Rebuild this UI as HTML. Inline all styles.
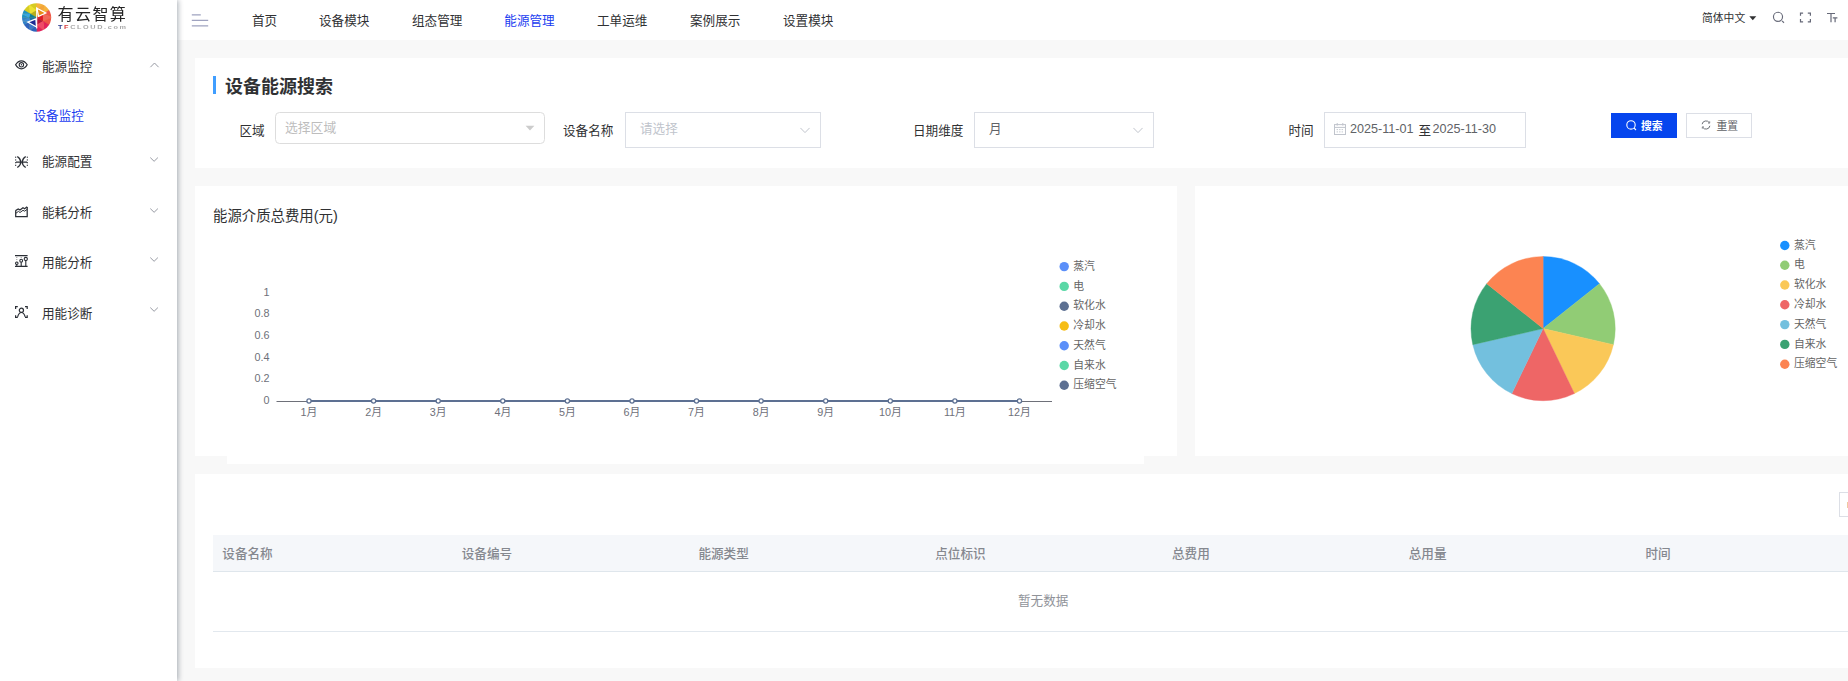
<!DOCTYPE html>
<html lang="zh-CN">
<head>
<meta charset="utf-8">
<title>设备能源搜索</title>
<style>
*{box-sizing:border-box;margin:0;padding:0}
html,body{width:1848px;height:681px;overflow:hidden;background:#f8f8f8}
body{font-family:"Liberation Sans","Noto Sans CJK SC",sans-serif;color:#303133;position:relative;-webkit-font-smoothing:antialiased}
.abs{position:absolute}
.t{position:absolute;white-space:nowrap;line-height:1}
/* sidebar */
#side{position:absolute;left:0;top:0;width:177px;height:681px;background:#fff;box-shadow:1.8px 0 5.4px rgba(0,21,41,.35);z-index:10}
#side .mi{position:absolute;left:42px;font-size:12.6px;color:#303133;line-height:14px;white-space:nowrap}
#side svg{position:absolute;overflow:visible}
/* header */
#head{position:absolute;left:177px;top:0;width:1671px;height:40px;background:#fff;z-index:5}
#head .nav{position:absolute;top:14px;font-size:12.6px;line-height:14px;color:#303133;white-space:nowrap}
#head svg{position:absolute;overflow:visible}
.card{position:absolute;background:#fff}
.lbl{position:absolute;font-size:12.6px;line-height:14px;color:#303133;white-space:nowrap}
.box{position:absolute;background:#fff;border:1px solid #dcdfe6}
.ph{position:absolute;font-size:12.6px;line-height:14px;white-space:nowrap}
svg text{font-family:"Liberation Sans","Noto Sans CJK SC",sans-serif}
.th{position:absolute;top:547px;font-size:12.6px;line-height:14px;font-weight:500;color:#85888f;white-space:nowrap}
</style>
</head>
<body>

<!-- ================= HEADER ================= -->
<div id="head">
  <svg style="left:14px;top:13px" width="18" height="14" viewBox="0 0 18 14"><g stroke="#9fa3c0" stroke-width="1.4" fill="none"><path d="M0.800 1.900H9.800M0.800 7.400H17.200M0.800 12.900H17.200"/></g></svg>
  <span class="nav" style="left:75px">首页</span>
  <span class="nav" style="left:142px">设备模块</span>
  <span class="nav" style="left:235px">组态管理</span>
  <span class="nav" style="left:327.3px;color:#1a3cf0">能源管理</span>
  <span class="nav" style="left:420px">工单运维</span>
  <span class="nav" style="left:513px">案例展示</span>
  <span class="nav" style="left:606px">设置模块</span>
  <span class="t" style="left:1525px;top:12px;font-size:10.8px;line-height:12px;color:#303133">简体中文</span>
  <svg style="left:1572px;top:16px" width="8" height="5" viewBox="0 0 8 5"><path d="M0.3 0.3H7.3L3.8 4.3Z" fill="#303133"/></svg>
  <svg style="left:1595px;top:11px" width="13" height="13" viewBox="0 0 13 13"><circle cx="6" cy="5.800" r="4.550" fill="none" stroke="#666978" stroke-width="1.150"/><path d="M10 9.900L12 11.700" stroke="#666978" stroke-width="1.150" fill="none"/></svg>
  <svg style="left:1622px;top:12px" width="13" height="11" viewBox="0 0 13 11"><path d="M1.500 3.800V1.100H4.100M8.800 1.100H11.400V3.800M11.400 7.100V9.800H8.800M4.100 9.800H1.500V7.100" fill="none" stroke="#666978" stroke-width="1.200"/></svg>
  <svg style="left:1650px;top:12px" width="11" height="11" viewBox="0 0 11 11"><path d="M0 1.500H8M4 1.500V10.200M5.800 5.900H10.400M8.100 5.900V10.200" fill="none" stroke="#666978" stroke-width="1.200"/></svg>
</div>

<!-- ================= SIDEBAR ================= -->
<div id="side">
  <!-- logo -->
  <svg style="left:22px;top:2.5px" width="30" height="30" viewBox="0 0 30 30">
    <defs><clipPath id="lc"><ellipse cx="14.6" cy="14.5" rx="14.6" ry="14.2"/></clipPath><filter id="lb" x="-10%" y="-10%" width="120%" height="120%"><feGaussianBlur stdDeviation="0.35"/></filter></defs>
    <g clip-path="url(#lc)"><g filter="url(#lb)">
      <rect x="-2" y="-2" width="34" height="34" fill="#e8c22a"/>
      <polygon points="14.60,14.50 8.12,10.76 14.60,7.01" fill="#b5ae1e" stroke="#b5ae1e" stroke-width="0.3"/>
      <polygon points="8.12,10.76 0.88,6.58 6.68,0.78" fill="#d6cc22" stroke="#d6cc22" stroke-width="0.3"/>
      <polygon points="8.12,10.76 6.68,0.78 14.60,7.01" fill="#ebe233" stroke="#ebe233" stroke-width="0.3"/>
      <polygon points="14.60,7.01 6.68,0.78 14.60,-1.34" fill="#d6cc22" stroke="#d6cc22" stroke-width="0.3"/>
      <polygon points="14.60,14.50 14.60,7.01 21.08,10.76" fill="#ee9a1c" stroke="#ee9a1c" stroke-width="0.3"/>
      <polygon points="14.60,7.01 14.60,-1.34 22.52,0.78" fill="#f6b23e" stroke="#f6b23e" stroke-width="0.3"/>
      <polygon points="14.60,7.01 22.52,0.78 21.08,10.76" fill="#f3a43a" stroke="#f3a43a" stroke-width="0.3"/>
      <polygon points="21.08,10.76 22.52,0.78 28.32,6.58" fill="#f6b23e" stroke="#f6b23e" stroke-width="0.3"/>
      <polygon points="14.60,14.50 21.08,10.76 21.08,18.24" fill="#de1a22" stroke="#de1a22" stroke-width="0.3"/>
      <polygon points="21.08,10.76 28.32,6.58 30.44,14.50" fill="#ee5546" stroke="#ee5546" stroke-width="0.3"/>
      <polygon points="21.08,10.76 30.44,14.50 21.08,18.24" fill="#f1685a" stroke="#f1685a" stroke-width="0.3"/>
      <polygon points="21.08,18.24 30.44,14.50 28.32,22.42" fill="#ee5546" stroke="#ee5546" stroke-width="0.3"/>
      <polygon points="14.60,14.50 21.08,18.24 14.60,21.99" fill="#b5183c" stroke="#b5183c" stroke-width="0.3"/>
      <polygon points="21.08,18.24 28.32,22.42 22.52,28.22" fill="#e2205a" stroke="#e2205a" stroke-width="0.3"/>
      <polygon points="21.08,18.24 22.52,28.22 14.60,21.99" fill="#ef4868" stroke="#ef4868" stroke-width="0.3"/>
      <polygon points="14.60,21.99 22.52,28.22 14.60,30.34" fill="#e2205a" stroke="#e2205a" stroke-width="0.3"/>
      <polygon points="14.60,14.50 14.60,21.99 8.12,18.24" fill="#2a4fae" stroke="#2a4fae" stroke-width="0.3"/>
      <polygon points="14.60,21.99 14.60,30.34 6.68,28.22" fill="#2d62bc" stroke="#2d62bc" stroke-width="0.3"/>
      <polygon points="14.60,21.99 6.68,28.22 8.12,18.24" fill="#3a78cc" stroke="#3a78cc" stroke-width="0.3"/>
      <polygon points="8.12,18.24 6.68,28.22 0.88,22.42" fill="#2d62bc" stroke="#2d62bc" stroke-width="0.3"/>
      <polygon points="14.60,14.50 8.12,18.24 7.11,14.50" fill="#1b6fa6" stroke="#1b6fa6" stroke-width="0.3"/>
      <polygon points="8.12,18.24 0.88,22.42 -0.70,18.60" fill="#2f80cc" stroke="#2f80cc" stroke-width="0.3"/>
      <polygon points="8.12,18.24 -0.70,18.60 7.11,14.50" fill="#3c8cd6" stroke="#3c8cd6" stroke-width="0.3"/>
      <polygon points="7.11,14.50 -0.70,18.60 -1.24,14.50" fill="#2f80cc" stroke="#2f80cc" stroke-width="0.3"/>
      <polygon points="14.60,14.50 7.11,14.50 8.12,10.76" fill="#0f7f96" stroke="#0f7f96" stroke-width="0.3"/>
      <polygon points="7.11,14.50 -1.24,14.50 -0.70,10.40" fill="#1f92c4" stroke="#1f92c4" stroke-width="0.3"/>
      <polygon points="7.11,14.50 -0.70,10.40 8.12,10.76" fill="#36a6e4" stroke="#36a6e4" stroke-width="0.3"/>
      <polygon points="8.12,10.76 -0.70,10.40 0.88,6.58" fill="#1f92c4" stroke="#1f92c4" stroke-width="0.3"/>
    </g></g>
    <g filter="url(#lb)">
    <polygon points="14.9,5.2 23.8,10 16.6,13.4" fill="#e88c12" stroke="#fff" stroke-width="1.25" stroke-linejoin="miter"/>
    <polygon points="5.8,19.1 13.9,15.9 14.5,24" fill="#1c2a94" stroke="#fff" stroke-width="1.25" stroke-linejoin="miter"/>
    <path d="M14.7 4.6V25.4" stroke="#fff" stroke-width="1.1"/>
    </g>
  </svg>
  <span class="t" style="left:57.5px;top:5.6px;font-size:16px;line-height:18px;font-weight:400;color:#222;letter-spacing:1.45px;font-family:'Liberation Sans','Noto Sans CJK SC',sans-serif;opacity:.99">有云智算</span>
  <span class="t" style="left:57.5px;top:24.6px;font-size:5.6px;line-height:5px;font-weight:bold;color:#a8a8a8;letter-spacing:1.25px;transform-origin:0 0;transform:scaleX(1.3);opacity:.99"><span style="color:#2b3a8c">T</span><span style="color:#d83a3a">F</span>CLOUD.com</span>

  <!-- menu 1 -->
  <svg style="left:15px;top:60.4px" width="13" height="10" viewBox="0 0 13 10"><path d="M0.600 4.800C2.200 2.100 4.200 0.800 6.400 0.800S10.600 2.100 12.200 4.800C10.600 7.500 8.600 8.800 6.400 8.800S2.200 7.500 0.600 4.800Z" fill="none" stroke="#2b2f36" stroke-width="1.2"/><circle cx="6.400" cy="4.800" r="2.200" fill="none" stroke="#2b2f36" stroke-width="1.100"/><circle cx="6.400" cy="4.800" r="0.700" fill="#2b2f36"/></svg>
  <span class="mi" style="top:59.6px">能源监控</span>
  <svg style="left:150px;top:62px" width="9" height="6" viewBox="0 0 9 6"><path d="M0.400 5.200L4.500 1L8.600 5.200" fill="none" stroke="#979aa3" stroke-width="1"/></svg>
  <span class="mi" style="left:33.5px;top:108.6px;color:#1a3cf0">设备监控</span>

  <!-- menu 2 -->
  <svg style="left:15px;top:155.5px" width="13" height="12" viewBox="0 0 13 12"><g fill="none" stroke="#2b2f36" stroke-width="1.25"><path d="M2.300 0.400C4.300 1.800 5.800 3.800 5.800 6S4.300 10.200 2.300 11.600M10.700 0.400C8.700 1.800 7.200 3.800 7.200 6S8.700 10.200 10.700 11.600M1 6H12"/><path d="M0.7 0.600V11.4M12.3 0.600V11.4" stroke-width="1" stroke-dasharray="1.3 1.4"/></g></svg>
  <span class="mi" style="top:154.7px">能源配置</span>
  <svg style="left:149.8px;top:156.5px" width="9" height="6" viewBox="0 0 9 6"><path d="M0.300 0.600L4.100 4.300L7.900 0.600" fill="none" stroke="#979aa3" stroke-width="1"/></svg>

  <!-- menu 3 -->
  <svg style="left:15px;top:205.6px" width="13" height="12" viewBox="0 0 13 12"><g fill="none" stroke="#2b2f36" stroke-width="1.25" stroke-linejoin="miter"><path d="M0.7 4.2V10.600H12.2V1"/><path d="M0.7 4.600L3.200 2.900L5 4.100L8 1.700L9.600 2.700L12.2 0.700"/><path d="M1 7.2L3.400 5.400L5 6.500L8 4.300L9.600 5.200L12 3.500" stroke-width="1"/></g></svg>
  <span class="mi" style="top:205.6px">能耗分析</span>
  <svg style="left:149.8px;top:207.5px" width="9" height="6" viewBox="0 0 9 6"><path d="M0.300 0.600L4.100 4.300L7.900 0.600" fill="none" stroke="#979aa3" stroke-width="1"/></svg>

  <!-- menu 4 -->
  <svg style="left:15px;top:255px" width="13" height="12" viewBox="0 0 13 12"><g fill="none" stroke="#2b2f36" stroke-width="1.1"><path d="M0 0.600H12.600M0 11.400H12.600" stroke-width="1.2"/><path d="M1.800 9.600V11M6.200 7.200V11M10.800 5.600V11"/><circle cx="1.800" cy="8.300" r="1.250"/><circle cx="6.200" cy="5.700" r="1.400"/><circle cx="10.800" cy="4" r="1.600" /><path d="M1.800 2V6.400M6.200 2V3.600" stroke-width="0.800" stroke-dasharray="1 1" stroke="#777"/></g></svg>
  <span class="mi" style="top:255.6px">用能分析</span>
  <svg style="left:149.8px;top:257.2px" width="9" height="6" viewBox="0 0 9 6"><path d="M0.300 0.600L4.100 4.300L7.900 0.600" fill="none" stroke="#979aa3" stroke-width="1"/></svg>

  <!-- menu 5 -->
  <svg style="left:15px;top:306px" width="13" height="12" viewBox="0 0 13 12"><g fill="none" stroke="#2b2f36" stroke-width="1.2"><path d="M0.600 3V0.600H2.800M10 0.600H12.200V3M12.200 9.200V11.400H10M2.800 11.400H0.600V9.200"/><circle cx="6.400" cy="4.300" r="2.1"/><path d="M2.600 10.800C3.400 8 4.800 6.500 6.400 6.500S9.400 8 10.200 10.800"/></g></svg>
  <span class="mi" style="top:306.7px">用能诊断</span>
  <svg style="left:149.8px;top:307.4px" width="9" height="6" viewBox="0 0 9 6"><path d="M0.300 0.600L4.100 4.300L7.900 0.600" fill="none" stroke="#979aa3" stroke-width="1"/></svg>
</div>

<!-- ================= SEARCH CARD ================= -->
<div class="card" style="left:195px;top:58px;width:1653px;height:110px"></div>
<div class="abs" style="left:213px;top:76px;width:3px;height:18px;background:#409eff"></div>
<span class="t" style="left:225px;top:77px;font-size:18px;line-height:20px;font-weight:bold;color:#303133">设备能源搜索</span>

<span class="lbl" style="left:239.5px;top:124px">区域</span>
<div class="box" style="left:275px;top:112px;width:270px;height:32px;border-color:#ddd;border-radius:4.5px"></div>
<span class="ph" style="left:285px;top:121px;font-size:12.8px;color:#bdbdbd">选择区域</span>
<svg class="abs" style="left:525px;top:125px" width="10" height="6" viewBox="0 0 10 6"><path d="M0.6 0.8H9.4L5 5.4Z" fill="#ccc"/></svg>

<span class="lbl" style="left:563px;top:124px">设备名称</span>
<div class="box" style="left:625px;top:112px;width:196px;height:36px"></div>
<span class="ph" style="left:640px;top:122px;color:#c0c4cc">请选择</span>
<svg class="abs" style="left:800px;top:127px" width="10" height="7" viewBox="0 0 10 7"><path d="M0.4 0.9L5 5.6L9.6 0.9" fill="none" stroke="#c0c4cc" stroke-width="1"/></svg>

<span class="lbl" style="left:913px;top:124px">日期维度</span>
<div class="box" style="left:974px;top:112px;width:180px;height:36px"></div>
<span class="ph" style="left:989px;top:122px;color:#606266">月</span>
<svg class="abs" style="left:1133px;top:127px" width="10" height="7" viewBox="0 0 10 7"><path d="M0.4 0.9L5 5.6L9.6 0.9" fill="none" stroke="#c0c4cc" stroke-width="1"/></svg>

<span class="lbl" style="left:1288.5px;top:124px">时间</span>
<div class="box" style="left:1324px;top:112px;width:202px;height:36px"></div>
<svg class="abs" style="left:1334px;top:123px" width="12" height="12" viewBox="0 0 12 12"><g fill="none" stroke="#c0c4cc" stroke-width="1"><rect x="0.5" y="1.6" width="11" height="9.9"/><path d="M0.5 4.4H11.5M3.2 0V2.6M8.8 0V2.6"/><path d="M2.6 6.6H9.4M2.6 8.9H9.4" stroke-dasharray="1.4 1.1" stroke-width="0.9"/></g></svg>
<span class="ph" style="left:1350px;top:122px;color:#606266">2025-11-01</span>
<span class="ph" style="left:1418.5px;top:123.6px;color:#303133">至</span>
<span class="ph" style="left:1432.5px;top:122px;color:#606266">2025-11-30</span>

<div class="abs" style="left:1611px;top:113px;width:66px;height:25px;background:#0545ee"></div>
<svg class="abs" style="left:1626px;top:120px" width="11" height="11" viewBox="0 0 11 11"><circle cx="5" cy="4.9" r="4.2" fill="none" stroke="#fff" stroke-width="1.1"/><path d="M8 8L10 10" stroke="#fff" stroke-width="1.1"/></svg>
<span class="t" style="left:1641px;top:119.6px;font-size:10.8px;line-height:12px;font-weight:bold;color:#fff">搜索</span>
<div class="box" style="left:1686px;top:113px;width:66px;height:25px"></div>
<svg class="abs" style="left:1701.4px;top:119.9px" width="10" height="10" viewBox="0 0 10 10"><g fill="none" stroke="#6c6f75" stroke-width="1"><path d="M1.100 4.200A3.950 3.950 0 0 1 8.300 2.700"/><path d="M8.900 5.800A3.950 3.950 0 0 1 1.700 7.300"/><path d="M8.700 1.300V3.100H7M1.300 8.700V6.900H3" stroke-width="0.800"/></g></svg>
<span class="t" style="left:1716.5px;top:119.6px;font-size:10.8px;line-height:12px;color:#606266">重置</span>

<!-- ================= LINE CHART CARD ================= -->
<div class="card" style="left:227px;top:440px;width:917px;height:24px"></div>
<div class="card" style="left:195px;top:186px;width:982px;height:270px"></div>
<span class="t" style="left:213px;top:208px;font-size:14.4px;line-height:16px;color:#303133">能源介质总费用(元)</span>
<svg class="abs" style="left:195px;top:186px" width="982" height="278" viewBox="195 186 982 278">
  <g font-size="10.8" fill="#6e7079" text-anchor="end">
    <text x="269.5" y="295.8">1</text>
    <text x="269.5" y="317.4">0.8</text>
    <text x="269.5" y="339">0.6</text>
    <text x="269.5" y="360.6">0.4</text>
    <text x="269.5" y="382.2">0.2</text>
    <text x="269.5" y="403.8">0</text>
  </g>
  <path d="M276.5 401.5H1052" stroke="#6e7079" stroke-width="1" fill="none"/>
  <path d="M309 401H1019.5" stroke="#5d7092" stroke-width="2" fill="none"/>
  <g fill="#fff" stroke="#5d7092" stroke-width="1.25">
    <circle cx="309" cy="401" r="2.1"/><circle cx="373.6" cy="401" r="2.1"/><circle cx="438.2" cy="401" r="2.1"/><circle cx="502.8" cy="401" r="2.1"/>
    <circle cx="567.4" cy="401" r="2.1"/><circle cx="632" cy="401" r="2.1"/><circle cx="696.5" cy="401" r="2.1"/><circle cx="761.1" cy="401" r="2.1"/>
    <circle cx="825.7" cy="401" r="2.1"/><circle cx="890.3" cy="401" r="2.1"/><circle cx="954.9" cy="401" r="2.1"/><circle cx="1019.5" cy="401" r="2.1"/>
  </g>
  <g font-size="10.8" fill="#6e7079" text-anchor="middle">
    <text x="309" y="416">1月</text><text x="373.6" y="416">2月</text><text x="438.2" y="416">3月</text><text x="502.8" y="416">4月</text>
    <text x="567.4" y="416">5月</text><text x="632" y="416">6月</text><text x="696.5" y="416">7月</text><text x="761.1" y="416">8月</text>
    <text x="825.7" y="416">9月</text><text x="890.3" y="416">10月</text><text x="954.9" y="416">11月</text><text x="1019.5" y="416">12月</text>
  </g>
  <g>
    <circle cx="1064.2" cy="266.6" r="4.7" fill="#5b8ff9"/>
    <circle cx="1064.2" cy="286.4" r="4.7" fill="#5ad8a6"/>
    <circle cx="1064.2" cy="306.2" r="4.7" fill="#5d7092"/>
    <circle cx="1064.2" cy="326" r="4.7" fill="#f6bd16"/>
    <circle cx="1064.2" cy="345.8" r="4.7" fill="#5b8ff9"/>
    <circle cx="1064.2" cy="365.5" r="4.7" fill="#5ad8a6"/>
    <circle cx="1064.2" cy="385.2" r="4.7" fill="#5d7092"/>
  </g>
  <g font-size="10.8" fill="#646464">
    <text x="1073.3" y="269.8">蒸汽</text>
    <text x="1073.3" y="289.6">电</text>
    <text x="1073.3" y="309.4">软化水</text>
    <text x="1073.3" y="329.2">冷却水</text>
    <text x="1073.3" y="349">天然气</text>
    <text x="1073.3" y="368.7">自来水</text>
    <text x="1073.3" y="388.4">压缩空气</text>
  </g>
</svg>

<!-- ================= PIE CHART CARD ================= -->
<div class="card" style="left:1195px;top:186px;width:653px;height:270px"></div>
<svg class="abs" style="left:1195px;top:186px" width="653" height="270" viewBox="1195 186 653 270">
  <g>
    <path d="M1543.1 328.6L1543.10 256.50A72.1 72.1 0 0 1 1599.47 283.65Z" fill="#1890ff" stroke="#1890ff" stroke-width="0.4"/>
    <path d="M1543.1 328.6L1599.47 283.65A72.1 72.1 0 0 1 1613.39 344.64Z" fill="#91cc75" stroke="#91cc75" stroke-width="0.4"/>
    <path d="M1543.1 328.6L1613.39 344.64A72.1 72.1 0 0 1 1574.38 393.56Z" fill="#fac858" stroke="#fac858" stroke-width="0.4"/>
    <path d="M1543.1 328.6L1574.38 393.56A72.1 72.1 0 0 1 1511.82 393.56Z" fill="#ee6666" stroke="#ee6666" stroke-width="0.4"/>
    <path d="M1543.1 328.6L1511.82 393.56A72.1 72.1 0 0 1 1472.81 344.64Z" fill="#73c0de" stroke="#73c0de" stroke-width="0.4"/>
    <path d="M1543.1 328.6L1472.81 344.64A72.1 72.1 0 0 1 1486.73 283.65Z" fill="#3ba272" stroke="#3ba272" stroke-width="0.4"/>
    <path d="M1543.1 328.6L1486.73 283.65A72.1 72.1 0 0 1 1543.10 256.50Z" fill="#fc8452" stroke="#fc8452" stroke-width="0.4"/>
  </g>
  <g>
    <circle cx="1784.8" cy="245.5" r="4.7" fill="#1890ff"/>
    <circle cx="1784.8" cy="265.3" r="4.7" fill="#91cc75"/>
    <circle cx="1784.8" cy="285" r="4.7" fill="#fac858"/>
    <circle cx="1784.8" cy="304.8" r="4.7" fill="#ee6666"/>
    <circle cx="1784.8" cy="324.6" r="4.7" fill="#73c0de"/>
    <circle cx="1784.8" cy="344.4" r="4.7" fill="#3ba272"/>
    <circle cx="1784.8" cy="364.2" r="4.7" fill="#fc8452"/>
  </g>
  <g font-size="10.8" fill="#646464">
    <text x="1794" y="248.6">蒸汽</text>
    <text x="1794" y="268.4">电</text>
    <text x="1794" y="288.1">软化水</text>
    <text x="1794" y="307.9">冷却水</text>
    <text x="1794" y="327.7">天然气</text>
    <text x="1794" y="347.5">自来水</text>
    <text x="1794" y="367.3">压缩空气</text>
  </g>
</svg>

<!-- ================= TABLE CARD ================= -->
<div class="card" style="left:195px;top:474px;width:1653px;height:194px"></div>
<div class="box" style="left:1839px;top:492px;width:30px;height:25px"></div>
<div class="abs" style="left:1847px;top:502px;width:1px;height:6px;background:#f0c9a0"></div>
<div class="abs" style="left:213px;top:535px;width:1635px;height:36px;background:#f5f7fa"></div>
<div class="abs" style="left:213px;top:571px;width:1635px;height:1px;background:#dfe6ec"></div>
<div class="abs" style="left:213px;top:631px;width:1635px;height:1px;background:#e2e8ee"></div>
<span class="th" style="left:222.3px">设备名称</span>
<span class="th" style="left:461.7px">设备编号</span>
<span class="th" style="left:698.4px">能源类型</span>
<span class="th" style="left:935.2px">点位标识</span>
<span class="th" style="left:1172px">总费用</span>
<span class="th" style="left:1408.7px">总用量</span>
<span class="th" style="left:1645.4px">时间</span>
<span class="t" style="left:1018px;top:594px;font-size:12.6px;line-height:14px;color:#909399">暂无数据</span>

</body>
</html>
